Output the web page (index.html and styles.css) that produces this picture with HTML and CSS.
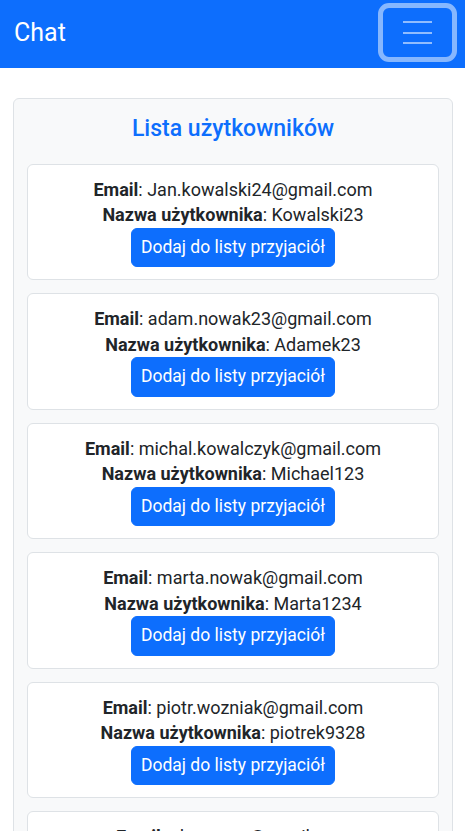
FILE: index.html
```html
<!DOCTYPE html>
<html lang="pl">
<head>
<meta charset="utf-8">
<title>Chat</title>
<link rel="stylesheet" href="styles.css">
</head>
<body>
<nav class="navbar">
  <a class="brand" href="#">Chat</a>
  <button class="toggler" type="button" aria-label="Menu">
    <span class="bar"></span>
    <span class="bar"></span>
    <span class="bar"></span>
  </button>
</nav>
<main class="main">
  <section class="panel">
    <h2 class="panel-title">Lista użytkowników</h2>
    <div class="user-card">
      <div class="line"><strong>Email</strong>: Jan.kowalski24@gmail.com</div>
      <div class="line"><strong>Nazwa użytkownika</strong>: Kowalski23</div>
      <button class="btn" type="button">Dodaj do listy przyjaciół</button>
    </div>
    <div class="user-card">
      <div class="line"><strong>Email</strong>: adam.nowak23@gmail.com</div>
      <div class="line"><strong>Nazwa użytkownika</strong>: Adamek23</div>
      <button class="btn" type="button">Dodaj do listy przyjaciół</button>
    </div>
    <div class="user-card">
      <div class="line"><strong>Email</strong>: michal.kowalczyk@gmail.com</div>
      <div class="line"><strong>Nazwa użytkownika</strong>: Michael123</div>
      <button class="btn" type="button">Dodaj do listy przyjaciół</button>
    </div>
    <div class="user-card">
      <div class="line"><strong>Email</strong>: marta.nowak@gmail.com</div>
      <div class="line"><strong>Nazwa użytkownika</strong>: Marta1234</div>
      <button class="btn" type="button">Dodaj do listy przyjaciół</button>
    </div>
    <div class="user-card">
      <div class="line"><strong>Email</strong>: piotr.wozniak@gmail.com</div>
      <div class="line"><strong>Nazwa użytkownika</strong>: piotrek9328</div>
      <button class="btn" type="button">Dodaj do listy przyjaciół</button>
    </div>
    <div class="user-card">
      <div class="line"><strong>Email</strong>: ola.mazur@gmail.com</div>
      <div class="line"><strong>Nazwa użytkownika</strong>: Ola2000</div>
      <button class="btn" type="button">Dodaj do listy przyjaciół</button>
    </div>
  </section>
</main>
</body>
</html>
```
FILE: styles.css
```css
html, body {
  margin: 0;
  padding: 0;
}
body {
  font-family: Roboto, "Liberation Sans", sans-serif;
  font-size: 18px;
  line-height: 25.5px;
  color: #212529;
  background: #ffffff;
}
.navbar {
  height: 68px;
  box-sizing: border-box;
  background: #0d6efd;
  display: flex;
  align-items: center;
  justify-content: space-between;
  padding: 0 8px 0 14px;
}
.brand {
  color: #ffffff;
  text-decoration: none;
  font-size: 25px;
  line-height: 1.2;
  margin-top: -3px;
}
.toggler {
  width: 79px;
  height: 59px;
  box-sizing: border-box;
  margin-top: -3px;
  background: transparent;
  border: 5px solid rgba(255, 255, 255, 0.5);
  border-radius: 11px;
  padding: 0;
  display: flex;
  flex-direction: column;
  align-items: center;
  justify-content: center;
  gap: 8.5px;
}
.bar {
  display: block;
  width: 29px;
  height: 2px;
  background: rgba(255, 255, 255, 0.55);
}
.main {
  padding: 30px 12px 0 13px;
}
.panel {
  background: #f8f9fa;
  border: 1px solid #dee2e6;
  border-radius: 6px;
  padding: 16px 13px 0;
}
.panel-title {
  margin: 0 0 21px;
  text-align: center;
  color: #0d6efd;
  font-size: 23px;
  font-weight: 500;
  line-height: 1.2;
}
.user-card {
  background: #ffffff;
  border: 1px solid #dee2e6;
  border-radius: 6px;
  padding: 12px;
  margin-bottom: 13px;
  display: flex;
  flex-direction: column;
  align-items: center;
  text-align: center;
}
.line strong {
  font-weight: 700;
}
.btn {
  font-family: inherit;
  font-size: 17.5px;
  line-height: 25.5px;
  color: #ffffff;
  background: #0d6efd;
  border: 1px solid #0d6efd;
  border-radius: 6px;
  padding: 6px 9px;
  cursor: pointer;
}
```
